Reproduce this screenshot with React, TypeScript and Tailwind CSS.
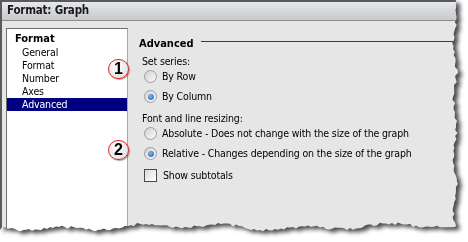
import React from 'react';

const W = 455;
const H = 227;

// torn paper edge, generated once from a fixed seed
const makeTornEdge = () => {
    let seed = 7;
    const rand = () => {
        seed = (seed * 9301 + 49297) % 233280;
        return seed / 233280;
    };
    const pts: string[] = ['0px 0px', `${W + 1}px 0px`];
    for (let y = 4; y < H; y += 3) {
        const x = W + Math.sin(y / 9) * 1.5 + (rand() - 0.5) * 3;
        pts.push(`${x.toFixed(1)}px ${y}px`);
    }
    for (let x = W; x > 0; x -= 3) {
        const y = H + Math.sin(x / 13) * 2 + Math.sin(x / 37) * 2 + (rand() - 0.5) * 3;
        pts.push(`${x}px ${y.toFixed(1)}px`);
    }
    pts.push(`0px ${H + 3}px`);
    return `polygon(${pts.join(',')})`;
};

const tornEdge = makeTornEdge();

const Radio = ({ checked }: { checked?: boolean }) => (
    <span className="flex h-[13px] w-[13px] shrink-0 items-center justify-center rounded-full border border-[#9c9c9c] bg-gradient-to-br from-[#d2d2d2] to-[#fbfbfb]">
        {checked && (
            <span className="h-[6px] w-[6px] rounded-full bg-[radial-gradient(circle_at_40%_35%,#7fb4ea,#1d5fb4)]" />
        )}
    </span>
);

const Marker = ({ n, className }: { n: string; className: string }) => (
    <div
        className={`absolute flex h-[20px] w-[21px] items-center justify-center rounded-full border-[1.5px] border-[#d8262a] bg-[radial-gradient(circle_at_40%_35%,#ffffff,#dcdcdc)] font-['Liberation_Sans',Arial,sans-serif] text-[16px] font-semibold leading-none tracking-normal text-black shadow-[1px_1px_1px_rgba(0,0,0,0.35)] ${className}`}>
        {n}
    </div>
);

export default function App() {
    const items = ['General', 'Format', 'Number', 'Axes', 'Advanced'];

    return (
        <div className="h-[242px] w-[468px] overflow-hidden bg-white font-['DejaVu_Sans_Condensed','Liberation_Sans',sans-serif] text-[10.5px] tracking-[-0.15px] text-black">
            <div className="[filter:drop-shadow(4px_3px_2px_rgba(0,0,0,0.7))]">
                <div
                    className="relative h-[234px] w-[460px] border-l-2 border-t-2 border-[#5a5a5a] bg-[#e6e6e6]"
                    style={{ clipPath: tornEdge }}>
                    {/* Title bar */}
                    <div className="flex h-[19px] items-center border-b border-[#8c8c8c] bg-gradient-to-b from-[#e6e8eb] to-[#c6c9cd] pl-[5px] text-[11.5px] font-bold tracking-[-0.2px] text-[#1a1a1a]">
                        Format: Graph
                    </div>

                    <div className="flex">
                        {/* Tree */}
                        <div className="ml-[4px] mt-[7px] h-[220px] w-[122px] border-l border-t border-[#6f6f6f] border-r-[#a8a8a8] border-r bg-white pt-[4px]">
                            <div className="flex h-[13px] items-center pl-[8px] text-[11px] font-bold tracking-normal">
                                Format
                            </div>
                            {items.map((item) => (
                                <div
                                    key={item}
                                    className={`flex h-[13px] items-center pl-[15px] ${
                                        item === 'Advanced'
                                            ? 'bg-[#000080] text-white'
                                            : ''
                                    }`}>
                                    {item}
                                </div>
                            ))}
                        </div>

                        {/* Options */}
                        <div className="flex flex-1 flex-col pt-[17px]">
                            <div className="flex h-[13px] items-center">
                                <span className="ml-[11px] text-[11px] font-bold tracking-normal">
                                    Advanced
                                </span>
                                <span className="ml-[7px] mb-[6px] h-px flex-1 bg-[#3c3c3c]" />
                            </div>
                            <div className="ml-[14px] mt-[4px] flex h-[13px] items-center">
                                Set series:
                            </div>
                            <div className="ml-[16px] mt-[2px] flex h-[13px] items-center gap-[5px]">
                                <Radio />
                                By Row
                            </div>
                            <div className="ml-[16px] mt-[7px] flex h-[13px] items-center gap-[5px]">
                                <Radio checked />
                                By Column
                            </div>
                            <div className="ml-[14px] mt-[9px] flex h-[13px] items-center">
                                Font and line resizing:
                            </div>
                            <div className="ml-[16px] mt-[2px] flex h-[13px] items-center gap-[5px]">
                                <Radio />
                                Absolute - Does not change with the size of the graph
                            </div>
                            <div className="ml-[16px] mt-[7px] flex h-[13px] items-center gap-[5px]">
                                <Radio checked />
                                Relative - Changes depending on the size of the graph
                            </div>
                            <div className="ml-[16px] mt-[9px] flex h-[13px] items-center gap-[6px]">
                                <span className="h-[13px] w-[13px] shrink-0 border border-[#4a4a4a] bg-gradient-to-br from-[#dcdcdc] to-white" />
                                Show subtotals
                            </div>
                        </div>
                    </div>

                    <Marker n="1" className="left-[106px] top-[57px]" />
                    <Marker n="2" className="left-[106px] top-[138px]" />
                </div>
            </div>
        </div>
    );
}
